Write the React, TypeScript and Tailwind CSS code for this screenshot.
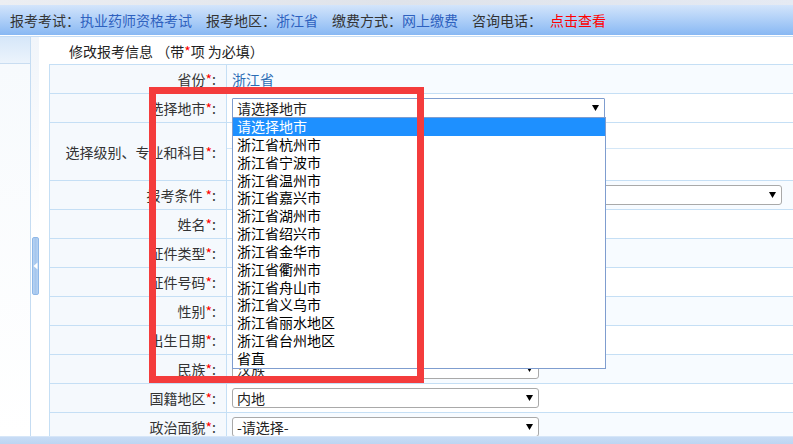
import React from "react";

const Arrow = () => (
  <svg width="7" height="6" viewBox="0 0 7 6" className="shrink-0">
    <path d="M0 0 H7 L3.5 6 Z" fill="#000" />
  </svg>
);

const Select = ({ text, w, focused }: { text: string; w: string; focused?: boolean }) => (
  <div
    className={`${w} h-[20px] flex items-center justify-between pl-[4px] pr-[5px] bg-white border ${
      focused ? "border-[#7f9dcf] rounded-[1px]" : "border-[#a9a9a9] rounded-[3px]"
    }`}
  >
    <span className="leading-[18px] whitespace-nowrap">{text}</span>
    <Arrow />
  </div>
);

const cities = [
  "请选择地市",
  "浙江省杭州市",
  "浙江省宁波市",
  "浙江省温州市",
  "浙江省嘉兴市",
  "浙江省湖州市",
  "浙江省绍兴市",
  "浙江省金华市",
  "浙江省衢州市",
  "浙江省舟山市",
  "浙江省义乌市",
  "浙江省丽水地区",
  "浙江省台州地区",
  "省直",
];

const Label = ({ t }: { t: string }) => (
  <span className="whitespace-pre">
    {t}
    <span className="text-[#ff0000]">*</span>:
  </span>
);

export default function App() {
  const rows: { label: string; h: string; light: boolean; value?: React.ReactNode; nested?: boolean }[] = [
    { label: "省份", h: "h-[29px]", light: true, value: <span className="text-[#2b6cb5] leading-[18px]">浙江省</span> },
    {
      label: "选择地市",
      h: "h-[29px]",
      light: false,
      value: (
        <div className="relative">
          <Select text="请选择地市" w="w-[373px]" focused />
          <div className="absolute left-0 top-[19px] w-[374px] bg-white border border-[#7f9dcf] z-10">
            {cities.map((c, i) => (
              <div
                key={c}
                className={`h-[17.85px] leading-[17.85px] pl-[4px] whitespace-nowrap ${
                  i === 0 ? "bg-[#1e90ff] text-white" : "text-black"
                }`}
              >
                {c}
              </div>
            ))}
          </div>
        </div>
      ),
    },
    { label: "选择级别、专业和科目", h: "h-[58px]", light: false, nested: true },
    { label: "报考条件 ", h: "h-[29px]", light: true, value: <Select text="" w="w-[550px]" /> },
    { label: "姓名", h: "h-[29px]", light: false },
    { label: "证件类型", h: "h-[29px]", light: true },
    { label: "证件号码", h: "h-[29px]", light: false },
    { label: "性别", h: "h-[29px]", light: true },
    { label: "出生日期", h: "h-[29px]", light: false },
    { label: "民族", h: "h-[29px]", light: true, value: <Select text="汉族" w="w-[307px]" /> },
    { label: "国籍地区", h: "h-[29px]", light: false, value: <Select text="内地" w="w-[307px]" /> },
    { label: "政治面貌", h: "h-[29px]", light: true, value: <Select text="-请选择-" w="w-[307px]" /> },
  ];

  return (
    <div className="relative w-[793px] h-[444px] overflow-hidden bg-white text-[14px] text-[#222] font-['Noto_Sans_CJK_SC','Noto_Sans',sans-serif] flex flex-col">
      {/* top strip */}
      <div className="h-[5px] shrink-0 bg-gradient-to-r from-[#eceef2] via-[#dfe3ea] to-[#e5eaf3]" />
      {/* nav bar */}
      <div className="h-[30px] shrink-0 flex items-center pl-[10px] bg-gradient-to-b from-[#d3e5fb] to-[#88b8f3] whitespace-nowrap text-[#333] leading-[18px]">
        <span>报考考试：</span>
        <span className="text-[#2e61bf]">执业药师资格考试</span>
        <span className="ml-[14px]">报考地区：</span>
        <span className="text-[#2e61bf]">浙江省</span>
        <span className="ml-[14px]">缴费方式：</span>
        <span className="text-[#2e61bf]">网上缴费</span>
        <span className="ml-[14px]">咨询电话：</span>
        <span className="ml-[8px] text-[#ff0000]">点击查看</span>
      </div>
      <div className="h-[1px] shrink-0 bg-white" />
      <div className="h-[1px] shrink-0 bg-[#c4dcf5]" />
      {/* body */}
      <div className="flex-1 flex min-h-0">
        {/* left sidebar */}
        <div className="w-[31px] shrink-0 border-r border-[#c5dcf2] flex flex-col">
          <div className="h-[27px] shrink-0 bg-gradient-to-b from-[#d6e7f9] to-[#ecf4fc] border-b border-[#c9ddf1]" />
          <div className="flex-1 bg-gradient-to-b from-[#f7fafd] to-white" />
        </div>
        {/* splitter */}
        <div className="w-[8px] shrink-0 flex flex-col pt-[200px] pl-[1px] bg-gradient-to-b from-[#f1f5fa] via-white to-white">
          <div className="w-[7px] h-[58px] rounded-[2px] border border-[#8fb8e8] bg-gradient-to-r from-[#b7d3f2] via-[#a6c7ee] to-[#b7d3f2] flex items-center justify-center">
            <svg width="5" height="8" viewBox="0 0 5 8">
              <path d="M4.5 0.5 L0.5 4 L4.5 7.5 Z" fill="#ffffff" />
            </svg>
          </div>
        </div>
        {/* main */}
        <div className="flex-1 min-w-0 pl-[10px] flex flex-col overflow-hidden">
          <div className="h-[27px] shrink-0 flex items-center pl-[20px] whitespace-pre leading-[18px] text-[#222]">
            <span>
              修改报考信息 （带<span className="text-[#ff0000]">*</span>项 为必填）
            </span>
          </div>
          <div className="w-[760px] shrink-0 border-t border-l border-[#c5dff5]">
            {rows.map((r, i) => (
              <div key={i} className={`flex ${r.h} border-b border-[#c5dff5]`}>
                <div className="w-[177px] shrink-0 border-r border-[#c5dff5] bg-[#f5f9fd] flex items-center justify-end pr-[10px] whitespace-nowrap leading-[18px] text-[#333]">
                  <Label t={r.label} />
                </div>
                <div className={`flex-1 min-w-0 ${r.light ? "bg-[#f7fbff]" : "bg-white"} ${r.nested ? "flex flex-col" : "flex items-center pl-[5px]"}`}>
                  {r.nested ? (
                    <>
                      <div className="h-[26px] border-b border-[#d4e7f7]" />
                      <div className="flex-1" />
                    </>
                  ) : (
                    r.value
                  )}
                </div>
              </div>
            ))}
          </div>
        </div>
      </div>
      {/* bottom bar */}
      <div className="h-[8px] shrink-0 border-t border-[#d6e6f8] bg-gradient-to-b from-[#c8dcf5] to-[#bdd5f2]" />
      {/* red annotation rectangle */}
      <div className="absolute left-[149px] top-[87px] w-[275px] h-[296px] border-[7px] border-[#f43c3c] z-20 pointer-events-none" />
    </div>
  );
}
